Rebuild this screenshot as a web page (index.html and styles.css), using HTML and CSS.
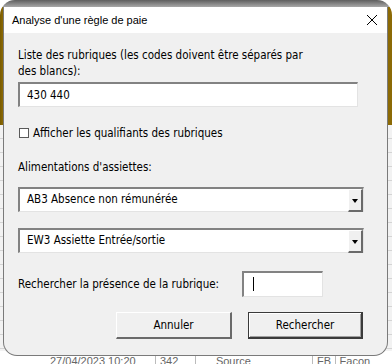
FILE: index.html
```html
<!DOCTYPE html>
<html lang="fr">
<head>
<meta charset="utf-8">
<link rel="stylesheet" href="styles.css">
</head>
<body>
<div class="frame">
  <div class="backdrop">
    <div class="topbar"></div>
    <div class="gold"></div>
    <div class="sheet"></div>
    <div class="lastrow">
      <span class="c1">27/04/2023 10:20</span><span class="c2">342</span><span class="c3">Source</span><span class="c4">FB</span><span class="c5">Facon</span>
    </div>
  </div>
  <div class="dialog">
    <div class="titlebar">
      <span class="title">Analyse d'une règle de paie</span>
      <svg class="close" width="12" height="12" viewBox="0 0 12 12"><path d="M1 1 L11 11 M11 1 L1 11" stroke="#000" stroke-width="1" fill="none"/></svg>
    </div>
    <div class="body">
      <div class="label two">Liste des rubriques (les codes doivent être séparés par<br>des blancs):</div>
      <div class="field wide">430 440</div>
      <div class="check"><span class="box"></span><span>Afficher les qualifiants des rubriques</span></div>
      <div class="label ali">Alimentations d'assiettes:</div>
      <div class="combo first"><span class="ctext">AB3 Absence non rémunérée</span><span class="drop"><span class="arrow"></span></span></div>
      <div class="combo second"><span class="ctext">EW3 Assiette Entrée/sortie</span><span class="drop"><span class="arrow"></span></span></div>
      <div class="search">
        <span class="label">Rechercher la présence de la rubrique:</span>
        <span class="field small"><span class="caret"></span></span>
      </div>
      <div class="buttons">
        <span class="btn">Annuler</span>
        <span class="btn default">Rechercher</span>
      </div>
    </div>
  </div>
</div>
</body>
</html>
```
FILE: styles.css
```css
html, body {
  margin: 0;
  padding: 0;
  background: #ffffff;
}
.frame {
  position: relative;
  width: 392px;
  height: 364px;
  border-radius: 15px;
  overflow: hidden;
  background: #ffffff;
  font-family: "DejaVu Sans Condensed", "DejaVu Sans", sans-serif;
  font-stretch: condensed;
}
.backdrop {
  display: flex;
  flex-direction: column;
  height: 100%;
}
.topbar {
  height: 7px;
  background: linear-gradient(#5e5e5e, #a8a8a8);
}
.gold {
  height: 118px;
  background: linear-gradient(90deg, #7a5c00 0, #8c6a05 3px, #8c6a05 100%);
}
.sheet {
  flex: 1;
  background-color: #f2f2f2;
  background-image: repeating-linear-gradient(180deg, transparent 0, transparent 13px, #d4d4d4 13px, #d4d4d4 14px);
}
.lastrow {
  height: 8px;
  background: #fff;
  display: flex;
  font-family: "Liberation Sans", Arial, sans-serif;
  font-size: 11px;
  line-height: 11px;
  padding-top: 5px;
  color: #666;
  white-space: nowrap;
  overflow: hidden;
}
.lastrow span {
  border-right: 1px solid #bbb;
  padding-left: 4px;
}
.c1 { width: 120px; padding-left: 50px !important; }
.c2 { width: 40px; }
.c3 { width: 110px; padding-left: 20px !important; }
.c4 { width: 20px; }
.c5 { width: 60px; border: none !important; }

.dialog {
  position: absolute;
  left: 3px;
  top: 7px;
  width: 383px;
  height: 348px;
  border: 1px solid #7a7a7a;
  border-top: none;
  background: #f0f0f0;
  border-radius: 0 0 14px 14px;
  display: flex;
  flex-direction: column;
  font-size: 11px;
  color: #000;
}
.titlebar {
  height: 26px;
  background: #fff;
  display: flex;
  align-items: center;
  justify-content: space-between;
  padding: 0 9px 0 8px;
}
.title {
  font-family: "Liberation Sans", Arial, sans-serif;
  font-size: 11px;
}
.close {
  display: block;
}
.body {
  padding: 14px 0 0 14px;
  display: flex;
  flex-direction: column;
  align-items: flex-start;
}
.label {
  line-height: 16px;
  font-size: 11.5px;
}
.field {
  box-sizing: border-box;
  background: #fff;
  border-top: 2px solid #828282;
  border-left: 2px solid #828282;
  border-right: 1px solid #e3e3e3;
  border-bottom: 1px solid #e3e3e3;
  font-size: 11.5px;
}
.wide {
  width: 340px;
  height: 25px;
  margin-top: 3px;
  padding: 3px 0 0 7px;
  line-height: 16px;
}
.check {
  margin-top: 18px;
  display: flex;
  align-items: center;
  line-height: 16px;
  font-size: 11.5px;
}
.box {
  width: 8px;
  height: 8px;
  border: 1px solid #5a5a5a;
  background: #fff;
  margin: 0 4px 0 1px;
}
.ali {
  margin-top: 18px;
}
.combo {
  box-sizing: border-box;
  width: 346px;
  height: 25px;
  background: #fff;
  border-top: 2px solid #828282;
  border-left: 2px solid #828282;
  border-right: 1px solid #e3e3e3;
  border-bottom: 1px solid #e3e3e3;
  display: flex;
  justify-content: space-between;
  font-size: 11.5px;
}
.first { margin-top: 12px; }
.second { margin-top: 16px; }
.ctext {
  padding: 2px 0 0 7px;
  line-height: 16px;
}
.drop {
  box-sizing: border-box;
  width: 15px;
  height: 23px;
  background: #f0f0f0;
  border-top: 1px solid #fff;
  border-left: 1px solid #fff;
  border-right: 2px solid #6a6a6a;
  border-bottom: 2px solid #6a6a6a;
  display: flex;
  align-items: center;
  justify-content: center;
}
.arrow {
  width: 0;
  height: 0;
  border-left: 3px solid transparent;
  border-right: 3px solid transparent;
  border-top: 4px solid #000;
  margin-top: 1px;
}
.search {
  margin-top: 18px;
  display: flex;
  align-items: center;
}
.search .label {
  width: 224px;
}
.small {
  width: 81px;
  height: 26px;
  padding: 4px 0 0 9px;
}
.caret {
  display: block;
  width: 1px;
  height: 14px;
  background: #000;
}
.buttons {
  margin-top: 15px;
  margin-left: 98px;
  display: flex;
  gap: 16px;
}
.btn {
  box-sizing: border-box;
  width: 116px;
  height: 27px;
  background: #f0f0f0;
  border-top: 1px solid #fff;
  border-left: 1px solid #fff;
  border-right: 2px solid #6a6a6a;
  border-bottom: 2px solid #6a6a6a;
  display: flex;
  align-items: center;
  justify-content: center;
  font-size: 11.5px;
}
.default {
  width: 115px;
  border: 1px solid #3a3a3a;
  border-right-width: 2px;
  border-bottom-width: 2px;
  box-shadow: inset 1px 1px 0 #fff, inset -1px -1px 0 #a0a0a0;
}
```
